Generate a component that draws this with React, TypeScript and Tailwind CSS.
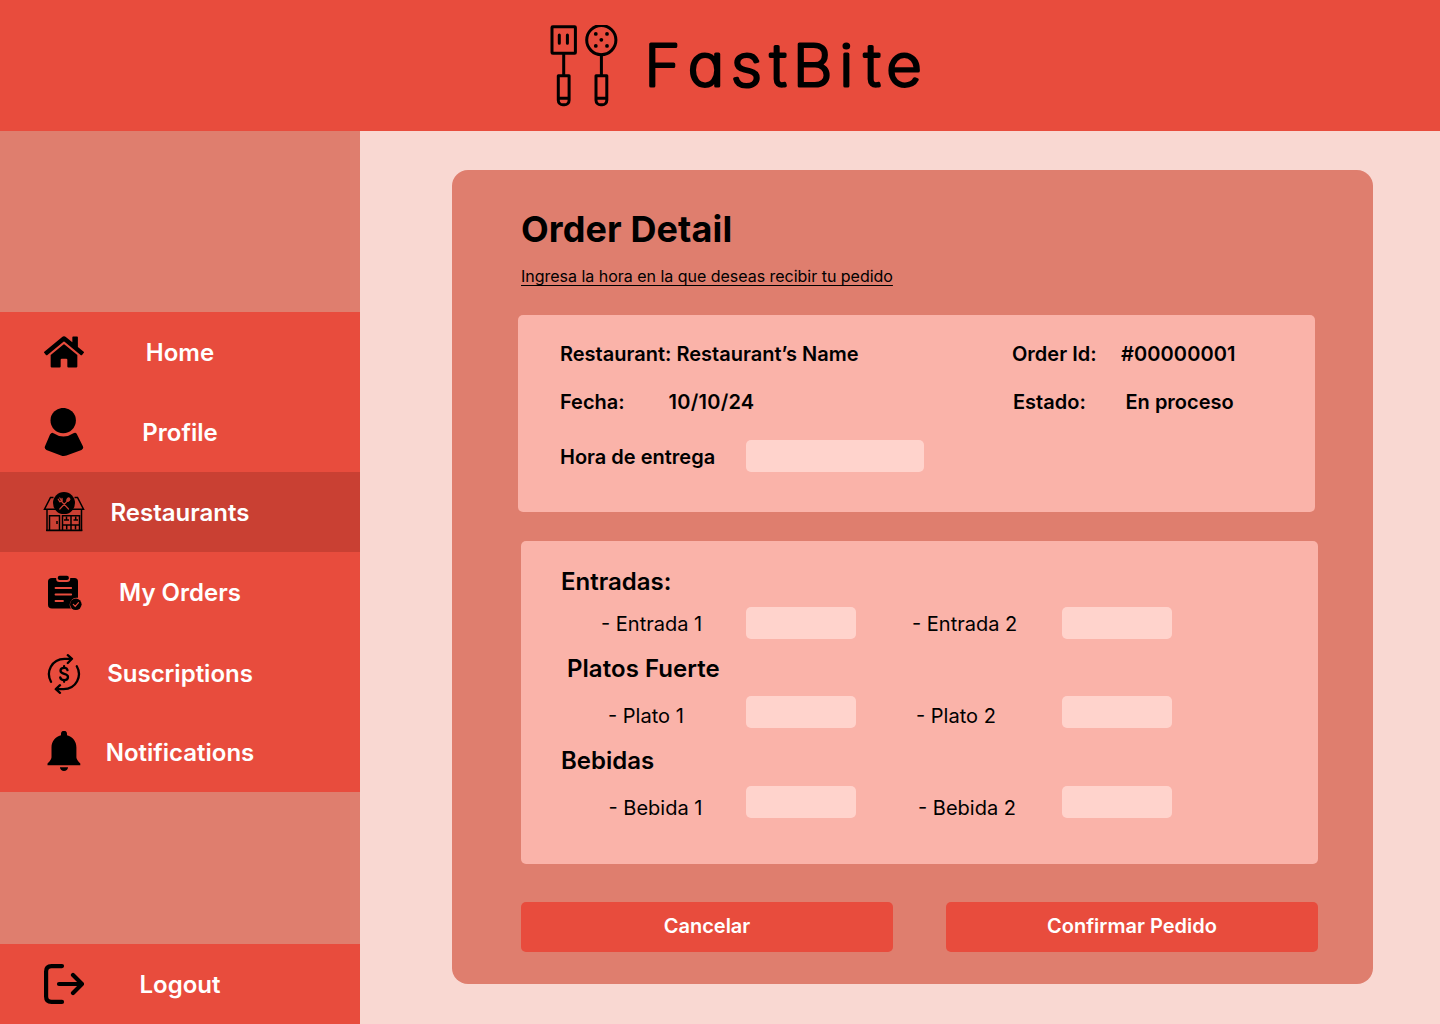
import type { ReactNode } from "react";
import { FaHome } from "react-icons/fa";

function UtensilsLogo() {
  return (
    <svg className="h-[82px] w-[69px] shrink-0" viewBox="0 0 69 82" fill="none" stroke="#000" strokeWidth="3" strokeLinejoin="round" strokeLinecap="round">
      <rect x="2" y="1.8" width="23.4" height="26.4" rx="0.8" />
      <path d="M9.3 10v8.3M17.4 10v8.3M13.7 28.5V50" />
      <path d="M8.3 50.8h10.8v24.4a4.6 4.6 0 0 1-4.6 4.6h-1.6a4.6 4.6 0 0 1-4.6-4.6zM8.3 73.3h10.8" />
      <circle cx="51.3" cy="15.1" r="14.6" />
      <path d="M51.4 30v20M46 50.8h10.8v24.4a4.6 4.6 0 0 1-4.6 4.6h-1.6a4.6 4.6 0 0 1-4.6-4.6zM46 73.3h10.8" />
      <g fill="#000" stroke="none">
        <circle cx="45.8" cy="8.9" r="1.9" />
        <circle cx="57" cy="8.9" r="1.9" />
        <circle cx="51.3" cy="14.8" r="1.9" />
        <circle cx="45.8" cy="20.9" r="1.9" />
        <circle cx="57" cy="20.9" r="1.9" />
      </g>
    </svg>
  );
}

function Wordmark() {
  return (
    <svg className="h-[91px] w-[290px] shrink-0 overflow-visible" viewBox="640 20 290 91" role="img" aria-label="FastBite">
      <text
        x="608 649.1 689.6 726.4 748.1 792 815.1 836.3"
        y="86.1"
        transform="scale(1.06 1)"
        className="font-['Inter',sans-serif] text-[57.5px] font-extralight [font-feature-settings:'cv11']"
        fill="#000"
        stroke="#000"
        strokeWidth="3.2"
        strokeLinejoin="round"
      >
        FastBite
      </text>
    </svg>
  );
}

function ProfileIcon() {
  return (
    <svg className="h-12 w-10" viewBox="0 0 40 48">
      <circle cx="19.2" cy="12.6" r="12.7" />
      <path d="M7.2 25.2Q8.2 24.5 9.5 25.3Q19.5 32 30 25.1Q31.8 24.3 32.8 26.1L38.9 38.2Q40 40.7 37.5 42L22.5 47.5Q19.7 48.5 17 47.4L2.4 41.9Q0 40.8 1 38.2L6 26.5Z" />
    </svg>
  );
}

function RestaurantIcon() {
  return (
    <svg className="mr-px h-10 w-[42px]" viewBox="0 0 42 40" fill="none" stroke="#000" strokeWidth="1.5">
      <path d="M10.5 5.5H7.5L1.5 17.2h39L34.5 5.5h-3M4 17v21.5h34.5V17M3 38.3h36.5M6.5 38V23.7h10V38M19.5 38V23.7h17V38M28 24v14M19.5 33h17" />
      <path d="M14 29v3" />
      <path d="M21 28h5M30.5 28H35M23.5 24.5V28M32.7 24.5V28M23.7 33v4.5M32.5 33v4.5" />
      <circle cx="21" cy="11.1" r="11" fill="#000" stroke="none" />
      <g stroke="#c94033" strokeWidth="1.2" strokeLinecap="round">
        <path d="m18 8.8 7.5 8.2M24 9.3l-7.2 7.7M15.2 7.2l1.6 2.6 2.4-.8-.2-2.6M16.8 6l1.4 2.2" />
        <ellipse cx="25.3" cy="7.6" rx="1.3" ry="1.8" transform="rotate(40 25.3 7.6)" fill="#c94033" />
      </g>
    </svg>
  );
}

function OrdersIcon() {
  return (
    <svg className="mt-0.5 ml-0.5 h-9 w-[34px]" viewBox="0 0 34 36">
      <path d="M4 3h4.2v.8Q8.2 7 11.4 7H19q3.2 0 3.2-3.2V3h4.3Q30 3 30 6.5v16.3a7 7 0 0 0-7 10.8H4Q0 33.6 0 29.8V6.5Q0 3 4 3Z" />
      <rect x="9.8" y="0.8" width="11" height="4.2" rx="1.8" />
      <path d="M7.5 13h15.7M7.5 19.5h15.7M7.5 26h7.5" stroke="#e84c3d" strokeWidth="1.8" strokeLinecap="round" />
      <circle cx="27.8" cy="29.3" r="5.8" />
      <path d="m25.3 29.4 1.9 1.9 3.3-3.6" fill="none" stroke="#e84c3d" strokeWidth="1.2" strokeLinecap="round" />
    </svg>
  );
}

function SubscriptionIcon() {
  return (
    <svg className="mt-[3px] h-10 w-[34px]" viewBox="0 0 34 40" fill="none" stroke="#000" strokeWidth="2.3" strokeLinecap="round" strokeLinejoin="round">
      <path d="M4 27.8C-1.4 18 4.5 5 17.5 4.8H25M20.8 1.2 25 4.8 20.8 9" />
      <path d="M29.8 12.3C35.3 22 29.5 35 16.5 35.2H9M13 31.2l-4.2 4L13 38.8" />
      <path d="M20.5 16.2c-.3-1.7-1.6-2.4-3.4-2.4-2.2 0-3.6 1.2-3.6 3 0 4.3 7.5 1.8 7.5 6.2 0 1.9-1.6 3.1-3.9 3.1-2.2 0-3.6-1-3.9-2.8M17.1 12.2v1.4M17.1 26.3v1.5" />
    </svg>
  );
}

function BellIcon() {
  return (
    <svg className="mb-0.5 h-10 w-[34px]" viewBox="0 0 34 40">
      <path d="M14 4.3V2.8a3 3 0 0 1 6 0v1.5c6 1.5 9.4 6.4 9.4 12.2v9.8q0 2.5 3.9 6.2v1.8H.5v-1.8q4-3.7 4-6.2v-9.8c0-5.8 3.5-10.7 9.5-12.2ZM12.9 36.2h8.2q-.7 3.8-4.1 3.8t-4.1-3.8Z" />
    </svg>
  );
}

function LogoutIcon() {
  return (
    <svg className="h-10 w-10" viewBox="0 0 40 40" fill="none" stroke="#000" strokeWidth="4.2" strokeLinecap="round" strokeLinejoin="round">
      <path d="M18 2.1H7.5Q2.1 2.1 2.1 7.5v25q0 5.4 5.4 5.4H18M15 20h22.5M29 11l9 9-9 9" />
    </svg>
  );
}

type NavItemProps = { icon: ReactNode; label: string; active?: boolean; labelClass?: string };

function NavItem({ icon, label, active = false, labelClass = "pt-0.5" }: NavItemProps) {
  return (
    <a className={`grid h-20 grid-cols-[128px_104px_128px] items-center text-white ${active ? "bg-[#c94033]" : "bg-[#e84c3d]"}`}>
      <span className="flex justify-center text-black">{icon}</span>
      <span className={`flex justify-center text-2xl font-semibold whitespace-nowrap ${labelClass}`}>{label}</span>
    </a>
  );
}

function Field({ className = "w-[110px]" }: { className?: string }) {
  return <input className={`h-8 rounded-[5px] bg-[#ffd3cc] px-2 outline-none ${className}`} />;
}

export default function App() {
  return (
    <div className="flex h-[1024px] w-[1440px] flex-col overflow-hidden bg-[#f9d8d2] font-['Inter',sans-serif] text-black">
      <header className="flex h-[131px] shrink-0 items-center bg-[#e84c3d] pl-[550px]">
        <UtensilsLogo />
        <div className="pl-[21px]">
          <Wordmark />
        </div>
      </header>
      <div className="flex grow">
        <aside className="flex w-[360px] shrink-0 flex-col justify-between bg-[#df7e6e] pt-[181px]">
          <nav>
            <NavItem icon={<FaHome className="h-9 w-10" />} label="Home" />
            <NavItem icon={<ProfileIcon />} label="Profile" />
            <NavItem icon={<RestaurantIcon />} label="Restaurants" active />
            <NavItem icon={<OrdersIcon />} label="My Orders" />
            <NavItem icon={<SubscriptionIcon />} label="Suscriptions" labelClass="pt-1" />
            <NavItem icon={<BellIcon />} label="Notifications" />
          </nav>
          <NavItem icon={<LogoutIcon />} label="Logout" />
        </aside>
        <main className="pt-[39px] pl-[92px]">
          <section className="h-[814px] w-[921px] rounded-2xl bg-[#df7e6e] px-[69px] pt-[35px]">
            <h1 className="text-[36px] leading-[48px] font-bold tracking-[0.1px]">Order Detail</h1>
            <p className="mt-[11px] h-6 text-base tracking-[-0.02px] whitespace-nowrap underline underline-offset-[3px]">
              Ingresa la hora en la que deseas recibir tu pedido
            </p>

            <div className="mt-[27px] -ml-[3px] h-[197px] w-[797px] rounded-[5px] bg-[#fab3a9] pt-[27px] pl-[42px] text-xl leading-6 font-semibold whitespace-nowrap">
              <div className="grid grid-cols-[452px_109px_1fr]">
                <span>Restaurant: Restaurant’s Name</span>
                <span>Order Id:</span>
                <span className="tracking-[0.1px]">#00000001</span>
              </div>
              <div className="mt-6 grid grid-cols-[108.5px_344.5px_112.5px_1fr]">
                <span>Fecha:</span>
                <span className="tracking-[0.25px]">10/10/24</span>
                <span>Estado:</span>
                <span>En proceso</span>
              </div>
              <div className="mt-[26px] grid grid-cols-[186px_178px]">
                <span className="pt-[5px]">Hora de entrega</span>
                <Field className="w-[178px]" />
              </div>
            </div>

            <div className="mt-[29px] h-[323px] w-[797px] rounded-[5px] bg-[#fab3a9] pt-[26px] text-xl leading-6 whitespace-nowrap">
              <h2 className="pl-10 text-2xl leading-[30px] font-semibold">Entradas:</h2>
              <div className="mt-[10px] grid grid-cols-[145px_166px_150px_110px] pl-20">
                <span className="pt-[5px]">- Entrada 1</span>
                <Field />
                <span className="pt-[5px]">- Entrada 2</span>
                <Field />
              </div>
              <h2 className="mt-[15px] pl-[46px] text-2xl leading-[30px] font-semibold tracking-[0.05px]">Platos Fuerte</h2>
              <div className="mt-[12px] grid grid-cols-[138px_170px_146px_110px] pl-[87px]">
                <span className="pt-2">- Plato 1</span>
                <Field />
                <span className="pt-2">- Plato 2</span>
                <Field />
              </div>
              <h2 className="mt-[18px] pl-10 text-2xl leading-[30px] font-semibold">Bebidas</h2>
              <div className="mt-[10px] grid grid-cols-[137.5px_172px_144px_110px] pl-[87.5px]">
                <span className="pt-[10px]">- Bebida 1</span>
                <Field />
                <span className="pt-[10px]">- Bebida 2</span>
                <Field />
              </div>
            </div>

            <div className="mt-[38px] flex w-[797px] justify-between text-xl font-semibold text-white">
              <button className="h-[50px] w-[372px] rounded-[5px] bg-[#e84c3d] pb-0.5">Cancelar</button>
              <button className="h-[50px] w-[372px] rounded-[5px] bg-[#e84c3d] pb-0.5">Confirmar Pedido</button>
            </div>
          </section>
        </main>
      </div>
    </div>
  );
}
